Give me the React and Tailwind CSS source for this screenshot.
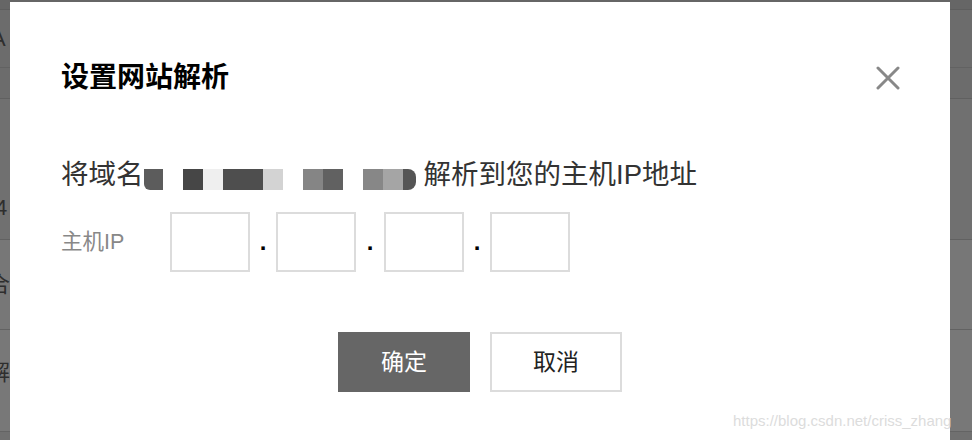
import React from 'react';

const font = { fontFamily: '"Liberation Sans", "Noto Sans CJK SC", sans-serif' };

// pixelated cells hiding the domain name
const mosaic = [
  { w: 'w-[19px]', c: 'bg-[#5c5c5c] rounded-bl-[6px]' },
  { w: 'w-[20px]', c: 'bg-white' },
  { w: 'w-[20px]', c: 'bg-[#464646]' },
  { w: 'w-[20px]', c: 'bg-[#efefef]' },
  { w: 'w-[40px]', c: 'bg-[#4e4e4e]' },
  { w: 'w-[20px]', c: 'bg-[#d3d3d3]' },
  { w: 'w-[20px]', c: 'bg-white' },
  { w: 'w-[20px]', c: 'bg-[#858585]' },
  { w: 'w-[20px]', c: 'bg-[#616161]' },
  { w: 'w-[20px]', c: 'bg-white' },
  { w: 'w-[20px]', c: 'bg-[#878787]' },
  { w: 'w-[20px]', c: 'bg-[#a5a5a5]' },
  { w: 'w-[13px]', c: 'bg-[#555555] rounded-r-[8px]' },
];

const IpBox = () => (
  <input className="w-[80px] h-[60px] border-2 border-[#dcdcdc] bg-white outline-none" />
);

const Dot = ({ w }) => (
  <span className={`${w} h-[60px] flex justify-center items-end pb-[18px] text-[24px] font-bold leading-none text-black`}>.</span>
);

const App = () => {
  return (
    <div className="relative w-[972px] h-[440px] overflow-hidden bg-[#707070]" style={font}>
      {/* page behind the overlay */}
      <div className="flex flex-col text-[#2e2e2e]">
        <div className="h-[10px] bg-[#666666] border-b border-[#5e5e5e]" />
        <div className="h-[58px] bg-[#6c6c6c] border-b border-[#626262] flex items-center">
          <span className="-ml-[9px] text-[22px]">A</span>
        </div>
        <div className="h-[31px] bg-[#6c6c6c] border-b border-[#606060]" />
        <div className="h-[141px] bg-[#707070] border-b border-[#616161] flex items-start pt-[92px]">
          <span className="-ml-[5px] text-[22px]">4</span>
        </div>
        <div className="h-[90px] bg-[#777777] border-b border-[#626262] flex items-center">
          <span className="-ml-[12px] text-[22px]">合</span>
        </div>
        <div className="h-[102px] bg-[#787878] border-b border-[#646464] flex items-start pt-[26px]">
          <span className="-ml-[12px] text-[22px]">解</span>
        </div>
      </div>

      {/* dialog */}
      <div className="absolute left-[10px] top-[2px] w-[940px] h-[460px] bg-white pl-[51px] pr-[50px] pt-[62px]">
        <div className="flex items-center justify-between">
          <h2 className="text-[28px] leading-[28px] font-bold text-black">设置网站解析</h2>
          <button className="w-[24px] h-[24px] -mt-[1px]">
            <svg viewBox="0 0 24 24" className="w-[24px] h-[24px]" stroke="#888888" strokeWidth="3" strokeLinecap="round">
              <path d="M2 2 L22 22 M22 2 L2 22" />
            </svg>
          </button>
        </div>

        <div className="mt-[69px] flex items-start text-[27.5px] leading-[27px] text-[#333333]">
          <span>将域名</span>
          <span className="flex mt-[8px] h-[21px]">
            {mosaic.map((m, i) => (
              <span key={i} className={`${m.w} h-[21px] ${m.c}`} />
            ))}
          </span>
          <span className="ml-[8px]">解析到您的主机IP地址</span>
        </div>

        <div className="mt-[22px] flex items-center">
          <label className="w-[109px] text-[21.5px] text-[#888888]">主机IP</label>
          <IpBox />
          <Dot w="w-[26px]" />
          <IpBox />
          <Dot w="w-[28px]" />
          <IpBox />
          <Dot w="w-[26px]" />
          <IpBox />
        </div>

        <div className="mt-[60px] flex justify-center gap-[20px] pr-[1px]">
          <button className="w-[132px] h-[60px] bg-[#666666] text-white text-[23px]">确定</button>
          <button className="w-[132px] h-[60px] border-2 border-[#dcdcdc] bg-white text-[#222222] text-[23px]">取消</button>
        </div>
      </div>

      <div className="absolute left-[733px] top-[412px] text-[15px] leading-[18px] text-[#dcdcdc] whitespace-nowrap">
        https://blog.csdn.net/criss_zhang
      </div>
    </div>
  );
};

export default App;
